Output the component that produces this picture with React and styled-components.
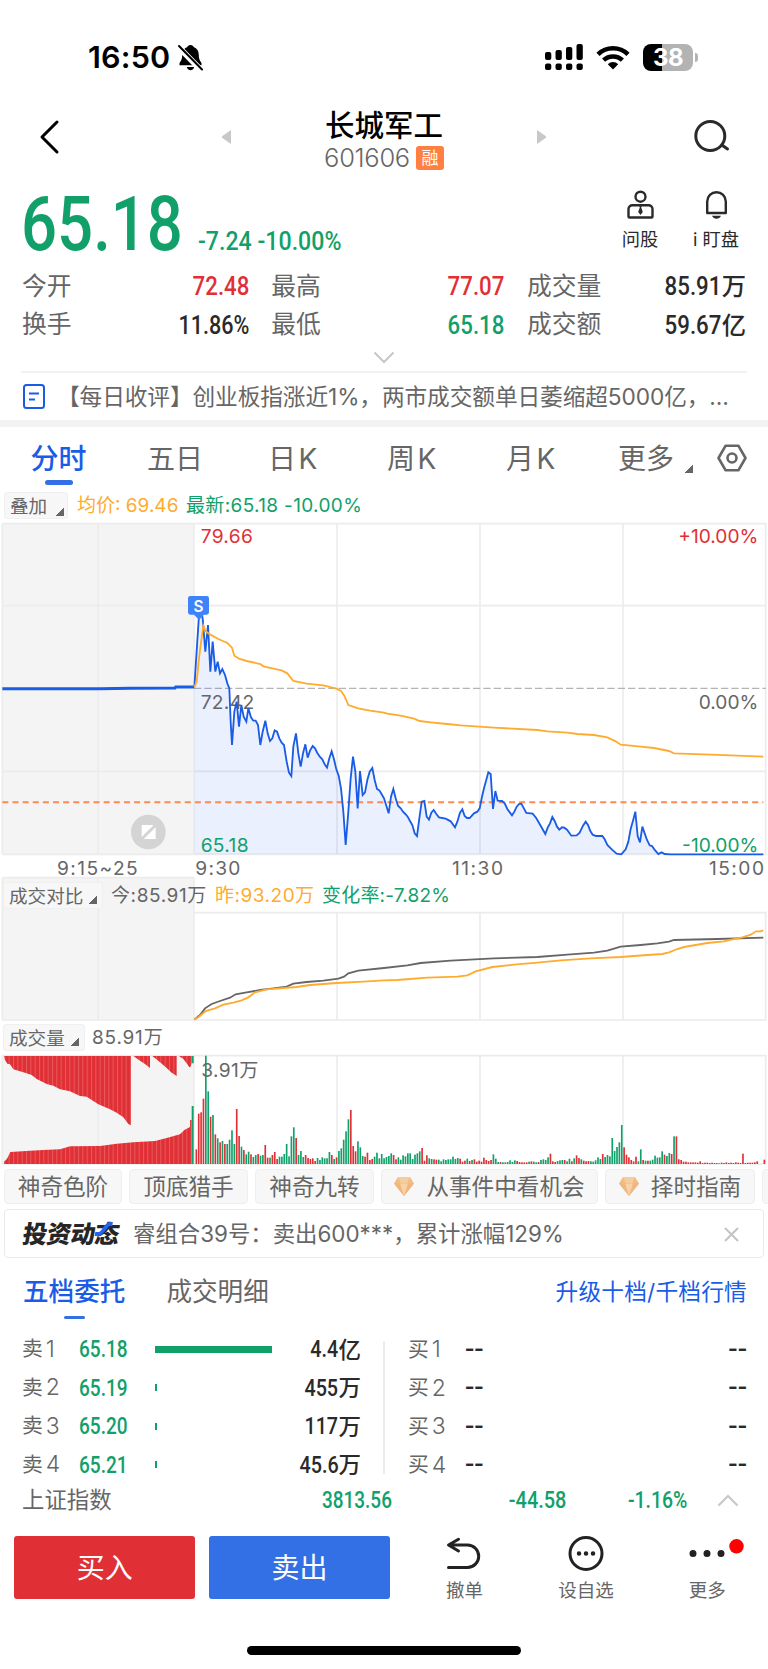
import styled, { createGlobalStyle } from 'styled-components';

const RED = '#e03036';
const GREEN = '#12a06a';
const BLUE = '#1a5ce6';
const ORANGE = '#ffab2e';
const GRAY = '#666';
const DARK = '#2a2a2a';
const LINE = '#ececec';

const FONT = `Inter, 'Noto Sans CJK SC', sans-serif`;

const GlobalStyle = createGlobalStyle`
	* {
		box-sizing: border-box;
	}
	body {
		margin: 0;
		background: #fff;
		font-family: ${FONT};
		line-height: 1.2;
		color: ${GRAY};
	}
	svg {
		display: block;
		flex: none;
		overflow: visible;
	}
`;

const Page = styled.div`
	width: 768px;
	height: 1669px;
	overflow: hidden;
	background: #fff;
	white-space: nowrap;
`;

/* condensed digits */
const Din = styled.span`
	display: inline-block;
	font-family: Roboto, 'Noto Sans CJK SC', sans-serif;
	font-weight: ${(p) => p.$weight || 500};
	font-size: ${(p) => p.$size || 26}px;
	line-height: 1.2;
	color: ${(p) => p.$color || DARK};
	transform: scaleX(${(p) => p.$scale || 0.855});
	transform-origin: ${(p) => p.$from || 'right'} center;
`;

/* ---------- status bar ---------- */

const StatusBar = styled.header`
	height: 96px;
	padding: 18px 70px 0 88px;
	display: flex;
	align-items: center;
	justify-content: space-between;
	color: #000;
`;

const Clock = styled.div`
	display: flex;
	align-items: center;
	gap: 8px;
	font-size: 30.5px;
	font-weight: 600;
	letter-spacing: 0.2px;
`;

const StatusIcons = styled.div`
	display: flex;
	align-items: center;
	gap: 13px;
`;

const Battery = styled.div`
	display: flex;
	align-items: center;
	gap: 2px;
`;

const BatteryBody = styled.div`
	width: 50px;
	height: 27px;
	border-radius: 8px;
	background: linear-gradient(90deg, #000 38%, #b3b3b3 38%);
	color: #fff;
	font-size: 24px;
	font-weight: 700;
	line-height: 27px;
	text-align: center;
	letter-spacing: -0.5px;
`;

const BatteryNub = styled.div`
	width: 3px;
	height: 9px;
	border-radius: 0 4px 4px 0;
	background: #b3b3b3;
`;

/* ---------- nav ---------- */

const NavBar = styled.nav`
	height: 82px;
	display: grid;
	grid-template-columns: 222px 9px 1fr 9px 222px;
	align-items: center;
`;

const NavLeft = styled.div`
	padding-left: 39px;
`;

const NavRight = styled.div`
	display: flex;
	justify-content: flex-end;
	padding-right: 38px;
`;

const NavTitle = styled.div`
	display: flex;
	flex-direction: column;
	align-items: center;
	padding-top: 10px;
`;

const StockName = styled.h1`
	margin: 0;
	font-size: 29.5px;
	line-height: 32px;
	font-weight: 500;
	color: #000;
`;

const StockCode = styled.div`
	display: flex;
	align-items: center;
	gap: 6px;
	height: 35px;
	font-size: 25.5px;
	font-weight: 300;
	letter-spacing: -0.3px;
`;

const Badge = styled.span`
	width: 28px;
	height: 24px;
	border-radius: 3px;
	background: #ff8040;
	color: #fff;
	font-size: 17px;
	font-weight: 400;
	line-height: 24px;
	text-align: center;
	letter-spacing: 0;
`;

/* ---------- quote ---------- */

const Quote = styled.section`
	height: 84px;
	padding-left: 21px;
	display: flex;
`;

const PriceLine = styled.div`
	flex: 1;
	display: flex;
	align-items: baseline;
	padding-top: 1px;
`;

const Price = styled.div`
	width: 177px;
`;

const Changes = styled.div`
	display: flex;
`;

const Action = styled.div`
	width: 76px;
	padding-top: 12px;
	display: flex;
	flex-direction: column;
	align-items: center;
	gap: 8px;
	color: ${DARK};
	font-size: 18.3px;
	line-height: 22px;
`;

const Actions = styled.div`
	display: flex;
	padding-right: 14px;
`;

const Stats = styled.section`
	padding: 5.5px 22px 0;
	display: grid;
	grid-template-columns: 227px 233.5px 219px;
	grid-auto-rows: 38.5px;
	column-gap: 22.25px;
`;

const Stat = styled.div`
	display: flex;
	align-items: center;
	justify-content: space-between;
	font-size: 24.8px;
`;

const Value = styled.span`
	display: flex;
	align-items: center;
	font-size: ${(p) => p.$size || 24.3}px;
	font-weight: 500;
	color: ${DARK};
`;

const Expand = styled.div`
	height: 26.5px;
	display: flex;
	justify-content: center;
	align-items: center;
`;

const News = styled.section`
	height: 49px;
	margin: 0 21px;
	border-top: 2px solid #f1f1f1;
	display: flex;
	align-items: center;
	gap: 12px;
	padding-left: 2px;
	font-size: 22.7px;
	letter-spacing: -0.1px;
`;

const Band = styled.div`
	height: 7px;
	background: #f3f3f3;
`;

/* ---------- chart ---------- */

const Periods = styled.div`
	height: 62px;
	display: grid;
	grid-template-columns: 117px 116px 122px 116px 122px 118px 1fr;
	align-items: stretch;
`;

const Period = styled.div`
	display: flex;
	flex-direction: column;
	align-items: center;
	padding-top: 14px;
	font-size: 28px;
	line-height: 36px;
	font-weight: ${(p) => (p.$active ? 500 : 400)};
	color: ${(p) => (p.$active ? BLUE : GRAY)};
	letter-spacing: ${(p) => (p.$latin ? 2.5 : 0)}px;

	&::after {
		content: '';
		width: 28px;
		height: 5.5px;
		margin-top: 2.5px;
		border-radius: 3px;
		background: ${(p) => (p.$active ? '#3370e6' : 'transparent')};
	}
`;

const MorePeriods = styled.div`
	display: flex;
	align-items: center;
	padding: 3px 0 0 25px;
	font-size: 28px;
`;

const Corner = styled.i`
	width: 8px;
	height: 8px;
	margin: ${(p) => p.$margin || '7px 0 0 6px'};
	background: linear-gradient(135deg, transparent 50%, ${GRAY} 50%);
`;

const Settings = styled.div`
	display: flex;
	align-items: center;
	justify-content: flex-end;
	padding-right: 21px;
`;

const Legend = styled.div`
	height: ${(p) => p.$height}px;
	padding-left: ${(p) => p.$left || 3}px;
	padding-top: ${(p) => p.$top || 0}px;
	display: flex;
	align-items: center;
	font-size: 19px;
`;

const Picker = styled.div`
	width: ${(p) => p.$width}px;
	height: 27px;
	padding-left: 5px;
	padding-top: 2px;
	border: 1px solid #f0f0f0;
	border-radius: 3px;
	background: #f7f7f7;
	display: flex;
	align-items: center;
	font-size: 18.6px;
`;

const LegendText = styled.span`
	margin-left: ${(p) => p.$left}px;
	padding-top: 2px;
	width: ${(p) => p.$width}px;
	color: ${(p) => p.$color || GRAY};
	letter-spacing: ${(p) => p.$spacing || 0}px;
`;

const Panel = styled.div`
	display: grid;

	& > * {
		grid-area: 1 / 1;
	}
`;

const ChartText = styled.text`
	font-family: ${FONT};
	font-size: 57.5px;
	letter-spacing: ${(p) => (p.textAnchor === 'end' ? 0 : 1)}px;
	fill: ${(p) => p.$color || GRAY};
`;

/* ---------- tools, banner ---------- */

const Tools = styled.div`
	display: flex;
	gap: 7px;
	padding: 4px 0 0 4px;
	width: 860px;
`;

const Tool = styled.div`
	height: 35px;
	width: ${(p) => p.$width}px;
	border: 1px solid #efefef;
	border-radius: 4px;
	background: #f7f7f7;
	display: flex;
	align-items: center;
	justify-content: center;
	gap: 12px;
	font-size: 22.6px;
`;

const Banner = styled.div`
	margin: 5px 4px 0;
	height: 49px;
	border: 1.5px solid #eaeaea;
	border-radius: 4px;
	padding: 1px 24px 0 18px;
	display: flex;
	align-items: center;
	font-size: 22.4px;
`;

const BannerLogo = styled.div`
	position: relative;
	width: 97px;
	font-size: 24.5px;
	line-height: 30px;
	font-weight: 900;
	color: #262626;
	letter-spacing: -0.5px;
	transform: skewX(-9deg);

	svg {
		position: absolute;
		right: 8px;
		top: 3px;
	}
`;

const BannerText = styled.div`
	flex: 1;
	margin-left: 13px;
`;

/* ---------- order book ---------- */

const BookTabs = styled.div`
	height: 83px;
	padding: 15px 21px 0 23px;
	display: flex;
	line-height: 37px;
`;

const BookTab = styled.div`
	display: flex;
	flex-direction: column;
	align-items: center;
	margin-right: 41px;
	font-size: 25.6px;
	font-weight: ${(p) => (p.$active ? 500 : 400)};
	color: ${(p) => (p.$active ? BLUE : GRAY)};

	&::after {
		content: '';
		width: 21px;
		height: 3px;
		margin-top: 6px;
		border-radius: 2px;
		background: ${(p) => (p.$active ? '#3370e6' : 'transparent')};
	}
`;

const Upgrade = styled.div`
	margin-left: auto;
	font-size: 22.7px;
	letter-spacing: 0.2px;
	color: ${BLUE};
`;

const Book = styled.div`
	height: 133px;
	display: grid;
	grid-template-columns: 383px 2px 383px;
	grid-template-rows: 133px;
`;

const BookSide = styled.div`
	margin-top: -11px;
`;

const BookDivider = styled.div`
	background: #ececec;
`;

const BookRow = styled.div`
	height: 38.5px;
	display: grid;
	grid-template-columns: ${(p) => (p.$buy ? '57px 80px 1fr' : '57px 76px 118px 1fr')};
	padding: ${(p) => (p.$buy ? '1px 21px 0 23px' : '0 22px')};
	align-items: center;
	font-size: 20.8px;
`;

const Level = styled.span`
	display: flex;
	align-items: center;
	gap: 3px;
	padding-top: 1px;

	b {
		font-size: 23px;
		font-weight: 300;
	}
`;

const Bar = styled.div`
	height: 7px;
	background: ${GREEN};
`;

const RowEnd = styled.div`
	display: flex;
	justify-content: flex-end;
`;

/* ---------- footer ---------- */

const IndexRow = styled.div`
	height: 54px;
	padding: 0 29px 1px 22px;
	display: grid;
	grid-template-columns: 300px 69px 175px 121px 1fr;
	align-items: center;
	font-size: 22.4px;
`;

const Right = styled.div`
	display: flex;
	justify-content: flex-end;
`;

const Footer = styled.footer`
	height: 71px;
	padding: 8px 0 0 14px;
	display: flex;
`;

const TradeButton = styled.button`
	width: 181.5px;
	height: 63px;
	margin-right: 13.5px;
	padding: 0;
	border: none;
	border-radius: 3px;
	background: ${(p) => p.$bg};
	color: #fff;
	font-family: inherit;
	font-size: 28px;
	line-height: 65px;
`;

const FootItem = styled.div`
	width: 121.5px;
	display: flex;
	flex-direction: column;
	align-items: center;
	gap: 7px;
	font-size: 18.5px;
	line-height: 24px;
`;

const HomeIndicator = styled.div`
	width: 274px;
	height: 9px;
	margin: 47px auto 0;
	border-radius: 5px;
	background: #000;
`;

/* chart coordinates are three units to one css pixel */
const PRE_OPEN = '7,521 300,521 390,520 525,519 527,516 583,516';

const PRICE =
	'583,516 597,300 604,290 608,310 616,410 624,330 631,470 638,380 646,470 653,440 660,475 667,462 675,480 682,505 688,520 692,620 696,690 703,590 710,560 717,635 724,570 731,605 739,620 745,580 753,607 760,617 767,617 774,630 781,690 788,650 796,617 803,655 810,678 817,670 824,646 831,650 838,670 845,683 852,690 860,740 867,773 874,783 880,695 888,655 895,715 902,755 909,715 916,688 923,728 930,707 938,693 945,700 952,714 960,726 967,733 974,748 981,758 988,730 995,709 1002,733 1009,763 1016,782 1023,820 1030,890 1037,990 1045,890 1052,790 1059,725 1066,770 1073,880 1080,768 1088,840 1095,832 1102,795 1109,770 1117,759 1124,795 1131,822 1138,826 1145,838 1152,850 1166,895 1173,845 1180,822 1187,850 1194,872 1202,880 1209,890 1216,897 1223,905 1230,918 1237,930 1244,955 1251,963 1258,910 1265,860 1273,858 1280,905 1287,914 1294,893 1301,885 1309,897 1317,907 1337,911 1352,919 1365,937 1372,920 1380,893 1387,883 1394,903 1401,909 1409,909 1422,895 1432,890 1439,880 1446,845 1452,820 1465,772 1472,777 1479,882 1486,828 1493,857 1506,858 1514,865 1522,882 1536,901 1543,890 1550,875 1557,867 1564,866 1579,894 1598,896 1608,908 1622,932 1636,957 1643,938 1650,925 1657,906 1664,918 1671,935 1678,944 1686,937 1693,938 1701,944 1714,962 1730,961 1739,953 1749,932 1757,920 1764,930 1771,948 1778,959 1788,963 1807,963 1814,973 1822,990 1836,1004 1850,1016 1864,1018 1877,1003 1885,980 1892,942 1899,917 1906,890 1913,963 1920,982 1927,935 1934,955 1941,975 1949,991 1956,993 1963,1003 1975,1017 1985,1012 1994,1017 2012,1018 2290,1018';

const AVERAGE =
	'583,516 590,500 597,430 604,375 610,332 617,349 631,359 655,372 682,384 696,398 703,422 717,431 740,438 781,447 790,454 820,461 845,466 862,475 880,498 920,506 970,511 1009,521 1023,528 1033,542 1045,570 1075,580 1110,587 1152,593 1162,596 1202,602 1242,611 1259,618 1292,622 1342,627 1382,631 1482,638 1612,645 1642,649 1702,653 1732,657 1782,660 1822,667 1847,679 1862,689 1922,695 1962,699 2007,708 2022,715 2132,719 2290,725';

const TODAY =
	'583,449 600,435 615,415 635,402 660,393 690,383 707,373 740,367 781,360 820,355 860,350 880,341 920,336 970,332 1015,326 1032,320 1045,310 1075,302 1152,294 1222,286 1262,279 1352,272 1482,265 1612,261 1702,254 1782,248 1822,242 1842,236 1862,230 1922,225 1972,220 2007,215 2022,210 2152,207 2290,203';

const YESTERDAY =
	'583,449 597,440 617,423 645,415 670,404 700,398 725,391 745,382 765,367 800,358 890,351 930,345 1010,339 1090,335 1152,331 1192,330 1282,323 1372,320 1402,316 1427,304 1477,291 1542,284 1612,278 1682,271 1772,265 1862,261 1942,255 1987,252 2007,247 2032,237 2052,231 2122,219 2172,214 2197,208 2227,202 2252,194 2268,184 2282,184 2290,181';

// one token a minute: colour + height
const VOLUME = (
	'r44 r151 r155 r196 g325 g218 r142 g147 r89 g77 r65 g69 r60 g60 g73 g101 g60 r165 r84 g52 r42 g29 g37 r29 g21 g27 r30 g25 g27 r57 ' +
	'r19 g19 r27 r36 r15 g22 g22 g30 g60 g23 g83 g110 r78 g27 g39 g21 r27 r18 r15 r17 r9 g18 g12 g20 g17 g17 g36 r27 g15 r20 g39 g47 ' +
	'g73 g98 g134 r162 r54 r38 g68 g50 g24 r22 r34 r12 r15 g22 g34 g17 g30 g17 g21 g24 g32 r27 r14 g20 g13 g26 g23 g32 g32 g15 g28 ' +
	'g32 g38 r48 r10 r26 g17 g15 r14 r13 g13 g8 g14 g12 g14 g14 g22 g15 g18 r16 r7 r10 g16 r9 g12 r14 r7 r10 r7 r19 r12 r9 r12 g29 ' +
	'g16 g6 r6 g5 g5 g6 g11 g6 g11 r9 r6 r5 r5 r5 g7 r8 g7 g5 r6 g12 g14 g12 g20 r31 r8 r6 g9 g11 g12 r12 g8 g16 r8 g17 r26 r18 g14 ' +
	'r10 r8 r9 g8 g7 g11 g20 g15 r30 g21 g27 g23 g78 g39 g51 g65 g117 r50 r28 r20 r12 r8 r22 g8 g44 r12 g10 r10 g10 g13 g25 g19 g20 ' +
	'g38 r28 g24 g33 r30 g83 r83 r14 r12 r7 r7 r5 r5 r5 r5 r4 r8 r3 r4 r4 r3 r4 r3 r3 r2 r4 r3 r5 r3 r4 r3 r5 r4 r3 r31 r3 r4 r4 ' +
	'r4 r5 r8 r0 r0 r13'
).split(' ');

const GRID_X = [1011, 1440, 1869];

const STATS = [
	{ label: '今开', value: '72.48', color: RED },
	{ label: '最高', value: '77.07', color: RED },
	{ label: '成交量', value: '85.91', unit: '万' },
	{ label: '换手', value: '11.86%' },
	{ label: '最低', value: '65.18', color: GREEN },
	{ label: '成交额', value: '59.67', unit: '亿' },
];

const SELLS = [
	{ price: '65.18', bar: 117, amount: '4.4', unit: '亿' },
	{ price: '65.19', bar: 2, amount: '455', unit: '万' },
	{ price: '65.20', bar: 2, amount: '117', unit: '万' },
	{ price: '65.21', bar: 2, amount: '45.6', unit: '万' },
];

function Chevron({ up }) {
	return (
		<svg width='22' height='13' viewBox='0 0 22 13' fill='none' stroke='#c8c8c8' strokeWidth='2.2'>
			<path d={up ? 'M1.5 11.5 11 2l9.5 9.5' : 'M1.5 1.5 11 11l9.5-9.5'} />
		</svg>
	);
}

function Grid({ top, bottom, rows = [] }) {
	return (
		<g stroke={LINE} strokeWidth='5' fill='none'>
			<path d={`M7 ${top}H582V${bottom}H7Z`} fill='#f4f4f4' stroke='none' />
			<path d={`M7 ${top}V${bottom}M294 ${top}V${bottom}M582 ${top}V${bottom}`} />
			{GRID_X.map((x) => (
				<path key={x} d={`M${x} ${rows[0] || top}V${bottom}`} />
			))}
			{rows.slice(1).map((y) => (
				<path key={y} d={`M7 ${y}H2297`} />
			))}
			<path d={`M582 ${rows[0] || top}H2297V${bottom}H7`} />
		</g>
	);
}

function PriceChart() {
	return (
		<svg width='768' height='356' viewBox='0 15 2304 1068'>
			<Grid top={26} bottom={1018} rows={[26, 272, 769]} />
			<path d='M7 26H582' stroke={LINE} strokeWidth='5' />
			<path d='M582 520H2297' stroke='#b4b4b4' strokeWidth='4' strokeDasharray='22 9' />
			<path d={`M${PRICE} 2290,1018 583,1018Z`} fill='rgba(26, 92, 230, 0.09)' />
			<ChartText x='602' y='581'>72.42</ChartText>
			<path d='M7 862H2290' stroke='#ff8a50' strokeWidth='6' strokeDasharray='18 12.4' />
			<polyline points={PRE_OPEN} fill='none' stroke={BLUE} strokeWidth='9' />
			<polyline points={PRICE} fill='none' stroke={BLUE} strokeWidth='5.5' />
			<polyline points={AVERAGE} fill='none' stroke={ORANGE} strokeWidth='5.5' />
			<path d='M571 243H620Q627 243 627 250V292Q627 299 620 299H612L597 315 582 299H571Q564 299 564 292V250Q564 243 571 243Z' fill='#3f83f8' />
			<ChartText x='596' y='290' $color='#fff' textAnchor='middle' style={{ fontSize: 46, fontWeight: 600 }}>S</ChartText>
			<ChartText x='602' y='85' $color={RED}>79.66</ChartText>
			<ChartText x='602' y='1010' $color={GREEN}>65.18</ChartText>
			<ChartText x='2275' y='85' $color={RED} textAnchor='end'>+10.00%</ChartText>
			<ChartText x='2275' y='581' textAnchor='end'>0.00%</ChartText>
			<ChartText x='2275' y='1010' $color={GREEN} textAnchor='end'>-10.00%</ChartText>
			<circle cx='445' cy='951' r='52' fill='#d4d4d4' />
			<path d='M425 930H461L425 966ZM467 937V972H431Z' fill='#fff' />
			<ChartText x='171' y='1079' textLength='243'>9:15~25</ChartText>
			<ChartText x='586' y='1079' textLength='136'>9:30</ChartText>
			<ChartText x='1356' y='1079' textLength='154'>11:30</ChartText>
			<ChartText x='2127' y='1079' textLength='166'>15:00</ChartText>
		</svg>
	);
}

function CompareChart() {
	return (
		<svg width='768' height='146' viewBox='0 18 2304 438'>
			<Grid top={23} bottom={450} rows={[128]} />
			<path d='M7 23H582' stroke={LINE} strokeWidth='5' />
			<polyline points={TODAY} fill='none' stroke='#666' strokeWidth='5.5' />
			<polyline points={YESTERDAY} fill='none' stroke={ORANGE} strokeWidth='5.5' />
		</svg>
	);
}

function VolumeChart() {
	return (
		<svg width='768' height='112' viewBox='0 549 2304 336'>
			<defs>
				<pattern id='stripes' width='13' height='10' patternUnits='userSpaceOnUse'>
					<rect width='13' height='10' fill={RED} />
					<rect width='3' height='10' fill='#e8595d' />
				</pattern>
			</defs>
			<Grid top={557} bottom={882} />
			<path d='M7 557H582' stroke={LINE} strokeWidth='5' />
			<path
				fill='url(#stripes)'
				d='M12 558 15 570 22 581 30 583 40 598 70 607 95 615 110 627 140 642 160 647 180 658 210 664 240 678 260 680 295 703 330 718 350 728 370 742 385 762 393 766V558ZM400 558 420 572 435 582 450 594V558ZM457 558 480 577 500 594 515 608 530 618V558ZM537 558 550 567 562 583 568 592 572 590 575 578V558Z'
			/>
			<path
				fill='url(#stripes)'
				d='M12 882V875L21 866 31 846 90 842 130 840 180 838 210 829 300 828 350 821 400 817 465 813 500 804 540 793 553 780 570 771V750H575V882Z'
			/>
			<path d='M575 558H581V580H575ZM575 708H581V882H575Z' fill={GREEN} />
			{VOLUME.map((v, i) => {
				const h = Number(v.slice(1));
				return (
					<rect
						key={i}
						x={586.5 + i * 7.13}
						y={882 - h}
						width='5'
						height={h}
						fill={v[0] === 'r' ? RED : GREEN}
					/>
				);
			})}
			<ChartText x='604' y='622' textLength='172'>3.91万</ChartText>
		</svg>
	);
}

function Gem() {
	return (
		<svg width='20' height='19' viewBox='0 0 20 19'>
			<path d='M4 0h12l4 6.5L10 19 0 6.5Z' fill='#f2bd85' />
			<path d='M4 0h12l-3 6H7Z' fill='#f6cd9f' />
			<path d='M0 6.5h20L10 19Z' fill='#efb67d' />
			<path d='M6 6.5h8L10 19Z' fill='#f7d2a9' />
		</svg>
	);
}

function App() {
	return (
		<Page>
			<GlobalStyle />
			<StatusBar>
				<Clock>
					16:50
					<svg width='25' height='27' viewBox='0 0 25 27'>
						<path d='M12.5 1c1.800 0 3 1 3.400 2.300 3.600 1.300 4.800 4.300 4.900 8 .1 4 1 5.400 2.700 7.700v2.300H1.500V19c1.700-2.300 2.600-3.700 2.700-7.700.1-3.700 1.300-6.700 4.900-8C9.500 2 10.700 1 12.500 1ZM8.800 23h7.400c-.4 2-1.800 3.200-3.700 3.200S9.200 25 8.800 23Z' />
						<path d='M-1 1.500 23 26' stroke='#fff' strokeWidth='6' />
						<path d='M1 2 24 25.500' stroke='#000' strokeWidth='2' strokeLinecap='round' />
					</svg>
				</Clock>
				<StatusIcons>
					<svg width='38' height='27' viewBox='0 0 38 27'>
						{[8, 6, 3, 0].map((y, i) => (
							<g key={y}>
								<rect x={i * 10.5} y={y} width='6.300' height={16 - y} rx='2' />
								<rect x={i * 10.5} y='19.500' width='6.300' height='6.500' rx='2' />
							</g>
						))}
					</svg>
					<svg width='34' height='25' viewBox='0 0 34 25' fill='none' stroke='#000' strokeWidth='4.500'>
						<path d='M2 9.300a21.500 21.500 0 0 1 30 0' />
						<path d='M7.600 15.200a13.500 13.500 0 0 1 18.800 0' />
						<path d='M17 24.500 11.800 19.200a7.500 7.500 0 0 1 10.400 0Z' fill='#000' stroke='none' />
					</svg>
					<Battery>
						<BatteryBody>38</BatteryBody>
						<BatteryNub />
					</Battery>
				</StatusIcons>
			</StatusBar>

			<NavBar>
				<NavLeft>
					<svg width='22' height='36' viewBox='0 0 22 36' fill='none' stroke='#000' strokeWidth='3' strokeLinecap='round' strokeLinejoin='round'>
						<path d='M18 3 3 18 18 33' />
					</svg>
				</NavLeft>
				<svg width='9' height='14' viewBox='0 0 9 14'>
					<path d='M9 0v14L0 7.800V6.200Z' fill='#c8c8c8' />
				</svg>
				<NavTitle>
					<StockName>长城军工</StockName>
					<StockCode>
						601606
						<Badge>融</Badge>
					</StockCode>
				</NavTitle>
				<svg width='9' height='14' viewBox='0 0 9 14'>
					<path d='M0 0v14l9-6.200V6.200Z' fill='#c8c8c8' />
				</svg>
				<NavRight>
					<svg width='36' height='34' viewBox='0 0 36 34' fill='none' stroke={DARK} strokeWidth='3' strokeLinecap='round'>
						<circle cx='16.300' cy='16' r='14.500' />
						<path d='m28.500 25.500 5 3.500' />
					</svg>
				</NavRight>
			</NavBar>

			<Quote>
				<PriceLine>
					<Price>
						<Din $size={76} $scale={0.835} $from='left' $color={GREEN}>65.18</Din>
					</Price>
					<Changes>
						<Din $scale={0.89} $from='left' $color={GREEN}>-7.24 -10.00%</Din>
					</Changes>
				</PriceLine>
				<Actions>
					<Action>
						<svg width='27' height='30' viewBox='0 0 27 30' fill='none' stroke={DARK} strokeWidth='2.400'>
							<circle cx='13.500' cy='6.700' r='5' />
							<path d='M5.500 15.200h16c2.300 0 4 1.700 4 4V26.500q0 1-1 1h-22q-1 0-1-1V19.200c0-2.300 1.700-4 4-4Z' />
							<path d='M12 15h3l-.8 2.500 1.600 4.500-2.300 3-2.300-3 1.600-4.500Z' fill={DARK} stroke='none' />
						</svg>
						问股
					</Action>
					<Action>
						<svg width='23' height='30' viewBox='0 0 23 30' fill='none' stroke={DARK} strokeWidth='2.400'>
							<path d='M2.200 23V11.500a9.300 9.300 0 0 1 18.600 0V23Z' strokeLinejoin='round' />
							<path d='M7 25.800h9c-.8 2-2.500 3-4.500 3s-3.700-1-4.500-3Z' fill={DARK} stroke='none' />
						</svg>
						<span>i 盯盘</span>
					</Action>
				</Actions>
			</Quote>

			<Stats>
				{STATS.map((s) => (
					<Stat key={s.label}>
						{s.label}
						<Value>
							<Din $color={s.color} $scale={s.value.endsWith('%') ? 0.83 : 0.855}>{s.value}</Din>
							{s.unit}
						</Value>
					</Stat>
				))}
			</Stats>
			<Expand>
				<Chevron />
			</Expand>
			<News>
				<svg width='22' height='25' viewBox='0 0 22 25' fill='none' stroke={BLUE} strokeWidth='2'>
					<rect x='1' y='1' width='20' height='23' rx='2.500' />
					<path d='M6 9.500h10M6 15.500h6' />
				</svg>
				<span>【每日收评】创业板指涨近1%，两市成交额单日萎缩超5000亿，…</span>
			</News>
			<Band />

			<Periods>
				<Period $active>分时</Period>
				<Period>五日</Period>
				<Period $latin>日K</Period>
				<Period $latin>周K</Period>
				<Period $latin>月K</Period>
				<MorePeriods>
					更多
					<Corner $margin='19px 0 0 11px' />
				</MorePeriods>
				<Settings>
					<svg width='30' height='28' viewBox='0 0 30 28' fill='none' stroke={GRAY} strokeWidth='2.600' strokeLinejoin='round'>
						<path d='M8.500 1.800h13L28.500 14l-7 12.200h-13L1.500 14Z' />
						<circle cx='15' cy='14' r='4.500' />
					</svg>
				</Settings>
			</Periods>
			<Legend $height={31} $left={4} $top={2}>
				<Picker $width={64}>
					叠加
					<Corner $margin='10px 0 0 9px' />
				</Picker>
				<LegendText $left={9} $width={109} $color={ORANGE}>均价: 69.46</LegendText>
				<LegendText $color={GREEN} $spacing={0.35}>最新:65.18 -10.00%</LegendText>
			</Legend>
			<PriceChart />
			<Panel>
				<CompareChart />
				<Legend $height={38} $top={1}>
					<Picker $width={100}>
						成交对比
						<Corner />
					</Picker>
					<LegendText $left={8} $width={104} $spacing={0.6}>今:85.91万</LegendText>
					<LegendText $width={107} $color={ORANGE} $spacing={0.5}>昨:93.20万</LegendText>
					<LegendText $color={GREEN} $spacing={0.2}>变化率:-7.82%</LegendText>
				</Legend>
			</Panel>
			<Legend $height={31}>
				<Picker $width={82}>
					成交量
					<Corner />
				</Picker>
				<LegendText $left={7} $spacing={0.8}>85.91万</LegendText>
			</Legend>
			<VolumeChart />

			<Tools>
				<Tool $width={118}>神奇色阶</Tool>
				<Tool $width={119}>顶底猎手</Tool>
				<Tool $width={119}>神奇九转</Tool>
				<Tool $width={217}>
					<Gem />
					从事件中看机会
				</Tool>
				<Tool $width={150}>
					<Gem />
					择时指南
				</Tool>
				<Tool $width={60} />
			</Tools>
			<Banner>
				<BannerLogo>
					投资动态
					<svg width='18' height='14' viewBox='0 0 18 14' fill='none' stroke='#2464f0' strokeWidth='4'>
						<path d='M1 12h4C9 11 10 3 14 2h3' />
					</svg>
				</BannerLogo>
				<BannerText>睿组合39号：卖出600***，累计涨幅129%</BannerText>
				<svg width='15' height='15' viewBox='0 0 15 15' stroke='#c4c4c4' strokeWidth='2'>
					<path d='m1 1 13 13M14 1 1 14' />
				</svg>
			</Banner>

			<BookTabs>
				<BookTab $active>五档委托</BookTab>
				<BookTab>成交明细</BookTab>
				<Upgrade>升级十档/千档行情</Upgrade>
			</BookTabs>
			<Book>
				<BookSide>
					{SELLS.map((s, i) => (
						<BookRow key={s.price}>
							<Level>
								卖<b>{i + 1}</b>
							</Level>
							<Din $size={23.5} $scale={0.81} $from='left' $color={GREEN}>{s.price}</Din>
							<Bar style={{ width: s.bar }} />
							<RowEnd>
								<Value $size={22.5}>
									<Din $size={23.5} $scale={0.84}>{s.amount}</Din>
									{s.unit}
								</Value>
							</RowEnd>
						</BookRow>
					))}
				</BookSide>
				<BookDivider />
				<BookSide>
					{SELLS.map((s, i) => (
						<BookRow key={s.price} $buy>
							<Level>
								买<b>{i + 1}</b>
							</Level>
							<Din $size={25} $scale={1.1} $from='left'>--</Din>
							<RowEnd>
								<Din $size={25} $scale={1.1}>--</Din>
							</RowEnd>
						</BookRow>
					))}
				</BookSide>
			</Book>

			<IndexRow>
				上证指数
				<Din $size={24} $scale={0.79} $from='left' $color={GREEN}>3813.56</Din>
				<Right>
					<Din $size={24} $scale={0.83} $color={GREEN}>-44.58</Din>
				</Right>
				<Right>
					<Din $size={24} $scale={0.81} $color={GREEN}>-1.16%</Din>
				</Right>
				<Right>
					<Chevron up />
				</Right>
			</IndexRow>
			<Footer>
				<TradeButton $bg={RED}>买入</TradeButton>
				<TradeButton $bg='#3370e6'>卖出</TradeButton>
				<FootItem>
					<svg width='36' height='35' viewBox='0 0 36 35' fill='none' stroke='#222' strokeWidth='3' strokeLinecap='round' strokeLinejoin='round'>
						<path d='M12.500 3.300 2.500 9l10 6M3 9h18.500a11.200 11.200 0 0 1 0 22.400H2.500' />
					</svg>
					撤单
				</FootItem>
				<FootItem>
					<svg width='36' height='35' viewBox='0 0 36 35'>
						<circle cx='18' cy='17.500' r='16' fill='none' stroke='#222' strokeWidth='3' />
						<path d='M11 17.500h.01M18 17.500h.01M25 17.500h.01' stroke='#222' strokeWidth='4.500' strokeLinecap='round' />
					</svg>
					设自选
				</FootItem>
				<FootItem>
					<svg width='36' height='35' viewBox='0 0 36 35'>
						<path d='M4 17.500h.01M18 17.500h.01M32 17.500h.01' stroke='#222' strokeWidth='7' strokeLinecap='round' />
						<circle cx='47.500' cy='10.300' r='7.200' fill='#fe0000' />
					</svg>
					更多
				</FootItem>
			</Footer>
			<HomeIndicator />
		</Page>
	);
}

export default App;
